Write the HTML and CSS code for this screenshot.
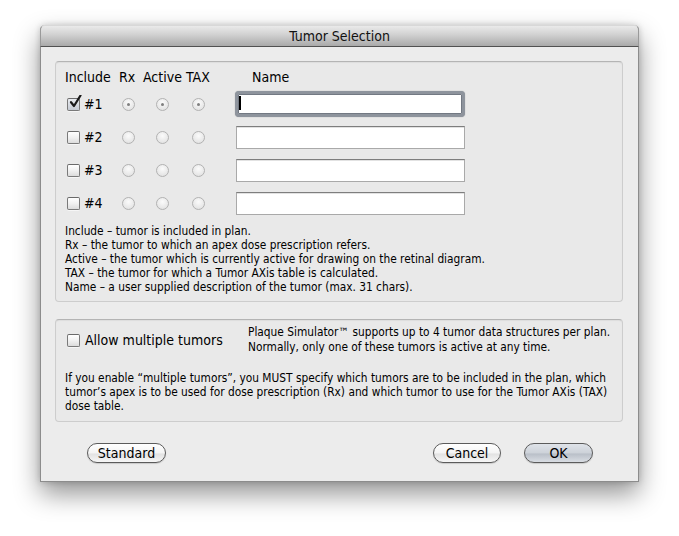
FILE: index.html
```html
<!DOCTYPE html>
<html>
<head>
<meta charset="utf-8">
<link rel="stylesheet" href="styles.css">
</head>
<body>
<div class="page">
  <div class="window">
    <div class="titlebar">Tumor Selection</div>
    <div class="content">
      <div class="group g1">
        <div class="grid">
          <div class="hd h-inc">Include</div>
          <div class="hd h-rx">Rx</div>
          <div class="hd h-act">Active</div>
          <div class="hd h-tax">TAX</div>
          <div class="hd h-name">Name</div>

          <div class="cell inc"><span class="cb checked"><svg class="tick" viewBox="0 0 14 14" width="14" height="14"><path d="M3 7.2 L6 11 L12.5 0.5" fill="none" stroke="#1a1a1a" stroke-width="2.2" stroke-linecap="round" stroke-linejoin="round"/></svg></span><span class="num">#1</span></div>
          <div class="cell rx"><span class="radio on"></span></div>
          <div class="cell act"><span class="radio on"></span></div>
          <div class="cell tax"><span class="radio on"></span></div>
          <div class="cell name"><div class="field focus"><span class="caret"></span></div></div>

          <div class="cell inc"><span class="cb"></span><span class="num">#2</span></div>
          <div class="cell rx"><span class="radio"></span></div>
          <div class="cell act"><span class="radio"></span></div>
          <div class="cell tax"><span class="radio"></span></div>
          <div class="cell name"><div class="field"></div></div>

          <div class="cell inc"><span class="cb"></span><span class="num">#3</span></div>
          <div class="cell rx"><span class="radio"></span></div>
          <div class="cell act"><span class="radio"></span></div>
          <div class="cell tax"><span class="radio"></span></div>
          <div class="cell name"><div class="field"></div></div>

          <div class="cell inc"><span class="cb"></span><span class="num">#4</span></div>
          <div class="cell rx"><span class="radio"></span></div>
          <div class="cell act"><span class="radio"></span></div>
          <div class="cell tax"><span class="radio"></span></div>
          <div class="cell name"><div class="field"></div></div>
        </div>
        <div class="notes">
          <div>Include – tumor is included in plan.</div>
          <div>Rx – the tumor to which an apex dose prescription refers.</div>
          <div>Active – the tumor which is currently active for drawing on the retinal diagram.</div>
          <div>TAX – the tumor for which a Tumor AXis table is calculated.</div>
          <div>Name – a user supplied description of the tumor (max. 31 chars).</div>
        </div>
      </div>

      <div class="group g2">
        <div class="toprow">
          <div class="allow"><span class="cb"></span><span class="allow-label">Allow multiple tumors</span></div>
          <div class="info">Plaque Simulator™ supports up to 4 tumor data structures per plan.<br>Normally, only one of these tumors is active at any time.</div>
        </div>
        <div class="para">If you enable “multiple tumors”, you MUST specify which tumors are to be included in the plan, which<br>tumor’s apex is to be used for dose prescription (Rx) and which tumor to use for the Tumor AXis (TAX)<br>dose table.</div>
      </div>

      <div class="buttons">
        <div class="btn b-std">Standard</div>
        <div class="spacer"></div>
        <div class="btn b-cancel">Cancel</div>
        <div class="btn b-ok default">OK</div>
      </div>
    </div>
  </div>
</div>
</body>
</html>
```
FILE: styles.css
```css
html, body {
  margin: 0;
  padding: 0;
  background: #ffffff;
}
body {
  font-family: "DejaVu Sans Condensed", "DejaVu Sans", sans-serif;
  color: #000;
}
.page {
  padding: 25px 0 0 40px;
  height: 511px;
}
.window {
  width: 599px;
  box-sizing: border-box;
  border: 1px solid #8c8c8c;
  border-top: none;
  border-radius: 5px 5px 0 0;
  box-shadow: 0 12px 26px rgba(0,0,0,0.42), 0 0 6px rgba(0,0,0,0.18);
  background: #ececec;
}
.titlebar {
  box-sizing: border-box;
  height: 22px;
  line-height: 21px;
  margin: 0 -1px;
  text-align: center;
  font-size: 14px;
  color: #111;
  background: linear-gradient(#eaeaea, #d0d0d0 45%, #a9a9a9);
  border: 1px solid #9a9a9a;
  border-top-color: #d8d8d8;
  border-bottom-color: #515151;
  border-radius: 5px 5px 0 0;
}
.content {
  padding: 14px 15px 18px 14px;
}
.group {
  border: 1px solid #cdcdcd;
  border-top-color: #b4b4b4;
  border-radius: 4px;
  background: #e9e9e9;
  box-shadow: inset 0 1px 1px rgba(0,0,0,0.05);
}
.g1 {
  padding: 8px 9px;
}
.grid {
  display: grid;
  grid-template-columns: 54px 24px 43px 50px 229px;
  grid-template-rows: 13px repeat(4, 24px);
  row-gap: 9px;
  align-items: center;
}
.hd {
  font-size: 14px;
  line-height: 16px;
  align-self: start;
  margin-top: -1px;
  white-space: nowrap;
}
.h-name { padding-left: 16px; }
.cell { display: flex; align-items: center; height: 24px; }
.inc { padding-left: 2px; }
.num { font-size: 14px; margin-left: 4px; }
.rx .radio { margin-left: 3px; }
.act .radio { margin-left: 13px; }
.tax .radio { margin-left: 6px; }

.cb {
  position: relative;
  display: inline-block;
  width: 13px;
  height: 13px;
  box-sizing: border-box;
  border: 1px solid #7a7a7a;
  border-top-color: #6a6a6a;
  border-radius: 2px;
  background: linear-gradient(#ffffff, #f1f1f1 50%, #dcdcdc);
  box-shadow: 0 1px 0 rgba(255,255,255,0.6);
  flex: none;
}
.cb.checked { background: linear-gradient(#e9ecf1, #d7dbe2 50%, #c5cad3); }
.tick {
  position: absolute;
  left: 0;
  top: -4px;
}
.radio {
  display: inline-block;
  width: 13px;
  height: 13px;
  box-sizing: border-box;
  border-radius: 50%;
  border: 1px solid #b2b2b2;
  background: radial-gradient(circle at 50% 35%, #fbfbfb, #e6e6e6 70%, #dadada);
  position: relative;
  flex: none;
}
.radio.on::after {
  content: "";
  position: absolute;
  left: 4px;
  top: 4px;
  width: 3px;
  height: 3px;
  border-radius: 50%;
  background: #7f7f7f;
}
.field {
  width: 229px;
  height: 23px;
  box-sizing: border-box;
  background: #fff;
  border: 1px solid #a9a9a9;
  border-top-color: #7e7e7e;
  box-shadow: inset 0 1px 0 #e2e2e2;
  position: relative;
}
.field.focus {
  width: 231px;
  height: 26px;
  margin-left: -1px;
  border: 3px solid #8e949d;
  border-radius: 4px;
  box-shadow: inset 0 0 0 1px #737983, 0 0 1px 0 rgba(60,66,76,0.5);
}
.caret {
  position: absolute;
  left: 1px;
  top: 2px;
  width: 2px;
  height: 14px;
  background: #000;
}
.notes {
  margin-top: 8px;
  font-size: 11.8px;
  line-height: 14px;
  white-space: nowrap;
  position: relative;
  top: 1px;
}
.g2 {
  margin-top: 17px;
  padding: 4px 9px 8px 9px;
}
.toprow {
  display: flex;
  align-items: center;
  position: relative;
  top: 1px;
}
.allow {
  display: flex;
  align-items: center;
  width: 181px;
  padding-left: 2px;
  white-space: nowrap;
}
.allow-label { font-size: 14px; margin-left: 5px; }
.info {
  font-size: 11.8px;
  line-height: 15px;
  white-space: nowrap;
}
.para {
  margin-top: 17px;
  font-size: 11.8px;
  line-height: 14px;
  white-space: nowrap;
}
.buttons {
  display: flex;
  align-items: center;
  margin-top: 21px;
  padding: 0 30px 0 32px;
}
.spacer { flex: 1; }
.btn {
  height: 20px;
  box-sizing: border-box;
  border: 1px solid #5b5b5b;
  border-radius: 10px;
  background: linear-gradient(#ffffff, #f4f4f4 50%, #e2e2e2 55%, #f6f6f6);
  font-size: 14px;
  line-height: 18px;
  text-align: center;
  box-shadow: 0 1px 1px rgba(0,0,0,0.15);
}
.b-std { width: 79px; }
.b-cancel { width: 68px; }
.b-ok { width: 69px; margin-left: 23px; }
.btn.default {
  background: linear-gradient(#dfe3e9, #cdd2d9 50%, #b9bfc8 55%, #d9dde3);
}
```
